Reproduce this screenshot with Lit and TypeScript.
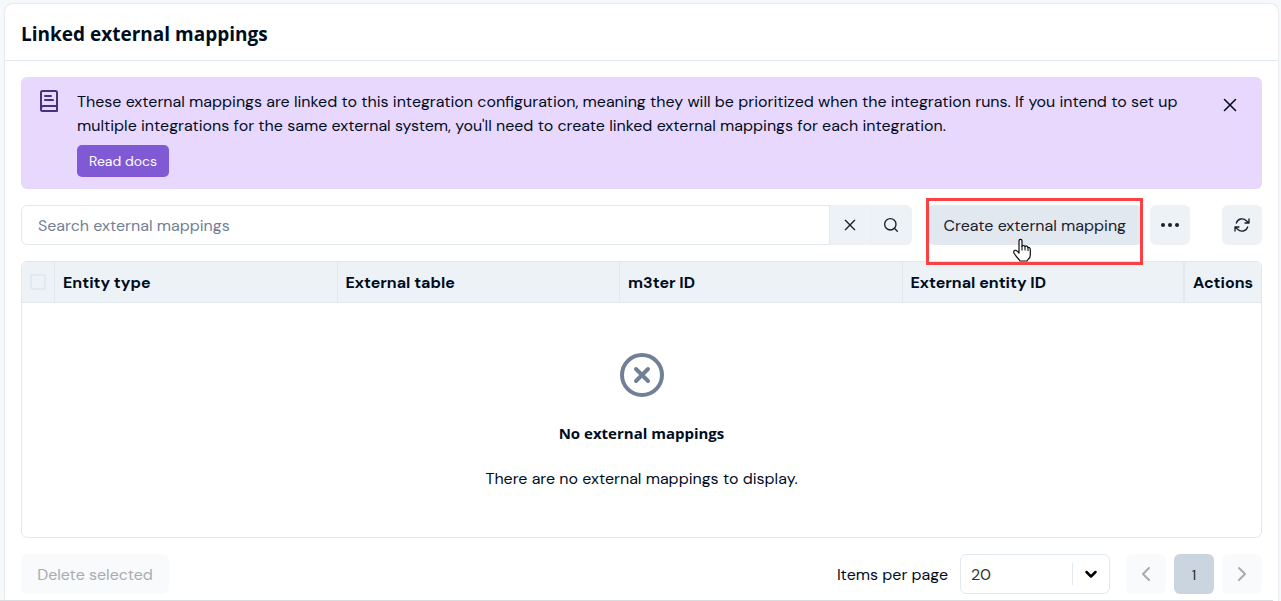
import { LitElement, html, css, svg } from "lit";
import { customElement, state } from "lit/decorators.js";

const cross = svg`<path d="M6 6l12 12M18 6L6 18" />`;

@customElement("app-root")
export class AppRoot extends LitElement {
  static styles = css`
    :host {
      --text: #000d1e;
      --line: #e2e8f0;
      --fill: #edf2f7;
      display: block;
      box-sizing: border-box;
      height: 100vh;
      overflow: hidden;
      padding: 4px 3px 0 5px;
      background: #f5f9fc;
      color: var(--text);
      font: 16px/24px "DM Sans", Inter, sans-serif;
      position: relative;
    }
    *, *::before { box-sizing: border-box; }
    svg { display: block; fill: none; stroke: currentColor; stroke-width: 2; stroke-linecap: round; stroke-linejoin: round; }
    button, input, select { font: inherit; color: inherit; margin: 0; }
    .card {
      min-height: 100%;
      background: #fff;
      border-radius: 8px 8px 0 0;
      box-shadow: 0 0 2px rgba(26, 32, 44, 0.2);
    }
    .head { padding: 18px 16px 14px; border-bottom: 1px solid var(--line); }
    h2 { margin: 0; font: 700 19px/24px "Open Sans", sans-serif; }
    .body { padding: 16px; display: flex; flex-direction: column; gap: 16px; }
    .banner {
      display: flex;
      align-items: flex-start;
      gap: 16px;
      padding: 12px 16px;
      background: #e9d8fd;
      border-radius: 6px;
    }
    .banner .book { color: #44337a; flex: none; }
    .message { flex: 1; padding-top: 1px; }
    .message p { margin: 0 0 7px; }
    .docs {
      display: inline-flex;
      align-items: center;
      height: 32px;
      padding: 0 12px;
      border-radius: 5px;
      background: #805ad5;
      color: #fff;
      font-size: 14px;
      text-decoration: none;
      vertical-align: top;
    }
    .close {
      width: 32px;
      height: 32px;
      padding: 0;
      border: 0;
      background: none;
      display: grid;
      place-items: center;
      flex: none;
    }
    .close svg { stroke-width: 1.700; }
    .toolbar { display: flex; gap: 8px; }
    .search { flex: 1; display: flex; margin-right: 8px; }
    .search input {
      flex: 1;
      min-width: 0;
      height: 40px;
      padding: 0 16px;
      border: 1px solid var(--line);
      border-radius: 6px 0 0 6px;
      background: #fff;
      outline: 0;
    }
    .search input::placeholder { color: #718096; opacity: 1; }
    .btn {
      height: 40px;
      min-width: 40px;
      padding: 0;
      border: 0;
      border-radius: 6px;
      background: var(--fill);
      color: #1a202c;
      display: grid;
      place-items: center;
    }
    .search .btn { width: 41px; border-radius: 0; border-right: 1px solid #e9eef4; }
    .search .btn:last-child { border-radius: 0 6px 6px 0; border-right: 0; }
    .create { position: relative; }
    .create .btn { padding: 2px 16px 0; min-width: 214px; background: var(--line); }
    .highlight {
      position: absolute;
      inset: -7px -1px -20px -2px;
      border: 3px solid #fc4144;
      pointer-events: none;
    }
    .cursor { position: absolute; left: 84px; top: 33px; pointer-events: none; }
    .refresh { margin-left: 24px; }
    .frame { border: 1px solid var(--line); border-radius: 6px; overflow: hidden; }
    table { width: 100%; table-layout: fixed; border-collapse: separate; border-spacing: 0; }
    th {
      height: 41px;
      padding: 2px 8px 0;
      text-align: left;
      font-weight: 700;
      white-space: nowrap;
      background: var(--fill);
      border-right: 1px solid var(--line);
      border-bottom: 1px solid var(--line);
    }
    th:nth-child(5) { border-right-width: 2px; }
    th:last-child { border-right: 0; }
    th.pick { width: 33px; padding-top: 0; }
    .actions { width: 76px; }
    th input {
      appearance: none;
      display: block;
      width: 16px;
      height: 16px;
      border: 2px solid var(--line);
      border-radius: 2px;
    }
    td { padding: 48px 0 46px; text-align: center; }
    td svg { margin: 0 auto 22px; color: #718096; }
    td h3 { margin: 0 0 22px; font: 700 15px/24px "Open Sans", sans-serif; }
    td p { margin: 0; }
    .foot { display: flex; align-items: center; gap: 8px; }
    .foot label { padding-top: 2px; }
    .foot .btn:disabled { background: #f8fafc; color: #a8abb0; }
    .foot .delete { padding: 2px 16px 0; min-width: 148px; margin-right: auto; }
    .size { position: relative; margin: 0 8px 0 4px; }
    .size select {
      appearance: none;
      display: block;
      width: 150px;
      height: 40px;
      padding: 2px 10px 0;
      border: 1px solid var(--line);
      border-radius: 6px;
      background: #fff;
      color: #333;
    }
    .size .arrow {
      position: absolute;
      right: 0;
      top: 9px;
      height: 22px;
      width: 38px;
      padding-right: 2px;
      border-left: 1px solid var(--line);
      display: grid;
      place-items: center;
      color: #000;
      pointer-events: none;
    }
    .foot .current { padding-top: 2px; background: #cbd5e0; font-size: 14px; }
    .edge { position: absolute; left: 0; right: 8px; bottom: 0; height: 1px; background: #d9dbde; }
  `;

  @state() private columns = ["Entity type", "External table", "m3ter ID", "External entity ID"];

  render() {
    return html`
      <section class="card">
        <header class="head"><h2>Linked external mappings</h2></header>
        <div class="body">
          <div class="banner">
            <svg class="book" width="24" height="24" viewBox="0 0 24 24">
              <path d="M20 17V3.500Q20 2 18.500 2H5.500Q4 2 4 3.500V20.500Q4 22 5.500 22H20V17H6Q4 17 4 19.500M8 7H14M8 11H16" />
            </svg>
            <div class="message">
              <p>These external mappings are linked to this integration configuration, meaning they will be prioritized when the integration runs. If you intend to set up multiple integrations for the same external system, you'll need to create linked external mappings for each integration.</p>
              <a class="docs" href="#docs">Read docs</a>
            </div>
            <button class="close" aria-label="Dismiss">
              <svg width="22" height="22" viewBox="0 0 24 24">${cross}</svg>
            </button>
          </div>

          <div class="toolbar">
            <div class="search">
              <input type="text" aria-label="Search external mappings" placeholder="Search external mappings" />
              <button class="btn" aria-label="Clear search">
                <svg width="16" height="16" viewBox="0 0 24 24"><path d="M5 5l14 14M19 5L5 19" /></svg>
              </button>
              <button class="btn" aria-label="Search">
                <svg width="16" height="16" viewBox="0 0 24 24"><circle cx="11" cy="11" r="8.500" /><path d="M21.500 21.500l-4.500-4.500" /></svg>
              </button>
            </div>
            <div class="create">
              <button class="btn">Create external mapping</button>
              <div class="highlight"></div>
              <svg class="cursor" width="20" height="25" viewBox="0 0 20 25">
                <path fill="#fff" stroke="#0b0b14" stroke-width="1.200" d="M7 14V3Q7 1.300 8.500 1.300T10 3V8.500Q11.500 6.500 13 8.500Q14.800 7 16 9.500Q18.300 9 18.300 12V17Q18.300 20 16 21.500L15 23H8L7 21.500Q4 18.500 2 15Q1.200 13 3 12.300Q4.500 12 7 15Z" />
                <path stroke="#0b0b14" stroke-width="1.100" d="M10 8.500V12M13 8.500V12M16 9.500V12.500" />
              </svg>
            </div>
            <button class="btn" aria-label="More options">
              <svg width="20" height="20" viewBox="0 0 20 20">
                <g fill="currentColor" stroke="none"><circle cx="3" cy="10" r="2" /><circle cx="10" cy="10" r="2" /><circle cx="17" cy="10" r="2" /></g>
              </svg>
            </button>
            <button class="btn refresh" aria-label="Refresh">
              <svg width="16" height="16" viewBox="0 0 24 24">
                <path d="M22.500 3V9H16.500M1.500 21V15H7.500M3.500 9A9 9 0 0 1 18.500 5.500L22.500 9M1.500 15L5.500 18.500A9 9 0 0 0 20.500 15" />
              </svg>
            </button>
          </div>

          <div class="frame">
            <table>
              <thead>
                <tr>
                  <th class="pick"><input type="checkbox" aria-label="Select all" disabled /></th>
                  ${this.columns.map((name) => html`<th>${name}</th>`)}
                  <th class="actions">Actions</th>
                </tr>
              </thead>
              <tbody>
                <tr>
                  <td colspan="6">
                    <svg width="48" height="48" viewBox="0 0 24 24"><circle cx="12" cy="12" r="10" /><path d="M9 9l6 6M15 9l-6 6" /></svg>
                    <h3>No external mappings</h3>
                    <p>There are no external mappings to display.</p>
                  </td>
                </tr>
              </tbody>
            </table>
          </div>

          <div class="foot">
            <button class="btn delete" disabled>Delete selected</button>
            <label for="page-size">Items per page</label>
            <div class="size">
              <select id="page-size"><option>20</option><option>50</option></select>
              <span class="arrow"><svg width="14" height="14" viewBox="0 0 14 14"><path stroke-width="2.500" d="M2.500 5L7 9.500L11.500 5" /></svg></span>
            </div>
            <button class="btn" aria-label="Previous page" disabled>
              <svg width="20" height="20" viewBox="0 0 20 20"><path d="M13 4L7 10L13 16" /></svg>
            </button>
            <button class="btn current" aria-current="page">1</button>
            <button class="btn" aria-label="Next page" disabled>
              <svg width="20" height="20" viewBox="0 0 20 20"><path d="M7 4L13 10L7 16" /></svg>
            </button>
          </div>
        </div>
      </section>
      <div class="edge"></div>
    `;
  }
}
